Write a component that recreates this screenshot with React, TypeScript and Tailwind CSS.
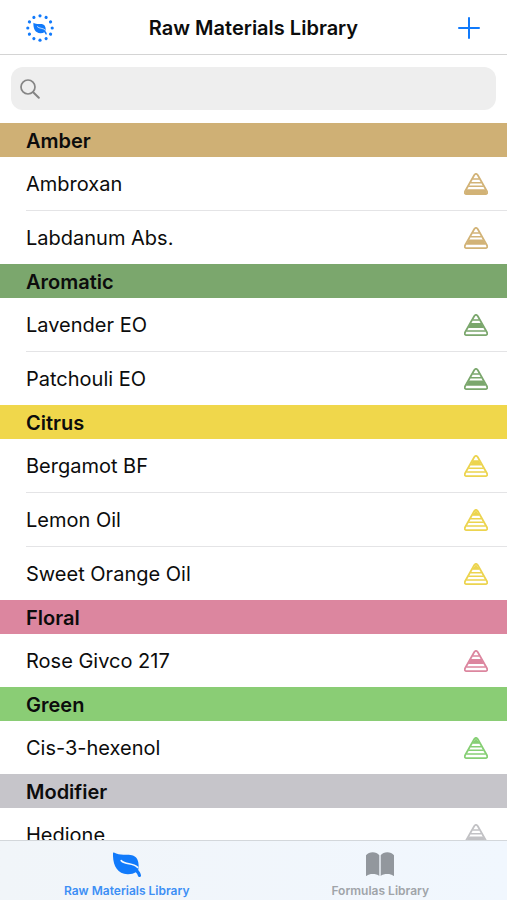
interface Material {
  name: string;
  // Filled layer of the pyramid, 0 is the top one
  note: number;
}

interface Family {
  name: string;
  bg: string;
  text: string;
  materials: Material[];
}

const families: Family[] = [
  {
    name: 'Amber',
    bg: 'bg-[#cfb075]',
    text: 'text-[#d2b377]',
    materials: [
      { name: 'Ambroxan', note: 4 },
      { name: 'Labdanum Abs.', note: 3 },
    ],
  },
  {
    name: 'Aromatic',
    bg: 'bg-[#7ba76d]',
    text: 'text-[#7ba76d]',
    materials: [
      { name: 'Lavender EO', note: 2 },
      { name: 'Patchouli EO', note: 3 },
    ],
  },
  {
    name: 'Citrus',
    bg: 'bg-[#f0d74b]',
    text: 'text-[#ecd44f]',
    materials: [
      { name: 'Bergamot BF', note: 1 },
      { name: 'Lemon Oil', note: 0 },
      { name: 'Sweet Orange Oil', note: 0 },
    ],
  },
  {
    name: 'Floral',
    bg: 'bg-[#dc869f]',
    text: 'text-[#dc869f]',
    materials: [{ name: 'Rose Givco 217', note: 2 }],
  },
  {
    name: 'Green',
    bg: 'bg-[#8acd75]',
    text: 'text-[#86cf74]',
    materials: [{ name: 'Cis-3-hexenol', note: 0 }],
  },
  {
    name: 'Modifier',
    bg: 'bg-[#c6c5ca]',
    text: 'text-[#c2c2c5]',
    materials: [{ name: 'Hedione', note: 3 }],
  },
];

const layers = [
  'M12 1.2 L8.6 6.3 H15.4 Z',
  'M8.8 6 H15.2 L17.4 9.8 H6.6 Z',
  'M6.6 9.6 H17.4 L19.5 13.4 H4.5 Z',
  'M4.6 13.2 H19.4 L21.6 17 H2.4 Z',
  'M2.4 17 H21.6 L23 20 Q23 21.2 21.8 21.2 H2.2 Q1 21.2 1 20 Z',
];

function PyramidIcon({ note, className = '' }: { note: number; className?: string }) {
  return (
    <svg viewBox="0 0 24 22" className={`h-[22px] w-6 ${className}`} fill="none" aria-hidden="true">
      <path d={layers[note]} fill="currentColor" />
      <path
        d="M10.3 2 Q12 -0.3 13.7 2 L22.9 18.2 Q24 20.9 21.4 21.2 H2.6 Q0 20.9 1.1 18.2 Z"
        stroke="currentColor"
        strokeWidth="1.8"
        strokeLinejoin="round"
      />
      <path d="M8.8 6 H15.2 M6.6 9.7 H17.4 M4.5 13.3 H19.5 M2.4 17 H21.6" stroke="currentColor" strokeWidth="1.4" />
    </svg>
  );
}

const leafPath =
  'M0.9 0.6 C0.2 0.2 0 0.7 0 1.4 C-0.4 12.5 3.8 21.8 14.6 22.3 C18 22.4 20.8 21.6 22.8 20.3 C23.9 21.4 24.7 22.8 25.1 24.2 C25.6 25.6 28.1 25.1 28 23.5 C27.8 21.3 26.6 19.5 25.2 18 C26.4 11.5 25.2 5.8 20.5 3.7 C15 1.2 7.5 4.6 0.9 0.6 Z';

function LeafShape() {
  return (
    <>
      <path d={leafPath} fill="currentColor" />
      <path d="M8.2 8.6 C12.6 13.2 19.4 10.4 24.6 15.4" stroke="#f6f9fd" strokeWidth="1.6" strokeLinecap="round" fill="none" />
    </>
  );
}

function LeafIcon() {
  return (
    <svg viewBox="0 0 28 26" className="h-[26px] w-7" aria-hidden="true">
      <LeafShape />
    </svg>
  );
}

function DottedLeafIcon() {
  return (
    <svg viewBox="0 0 28 28" className="size-7" aria-hidden="true">
      {Array.from({ length: 12 }).map((_, index) => (
        <circle key={index} cx="14" cy="1.8" r="1.6" fill="currentColor" transform={`rotate(${index * 30} 14 14)`} />
      ))}
      <g transform="translate(7.4 8.6) scale(0.48)">
        <LeafShape />
      </g>
    </svg>
  );
}

function BookIcon() {
  return (
    <svg viewBox="0 0 28 24" className="h-6 w-7" fill="currentColor" aria-hidden="true">
      <path d="M0 3.2 C3 -0.7 10.5 -0.7 13.3 3.2 V24 C10.5 21.6 3.4 21.5 0.8 23.7 C0.3 24.1 0 23.9 0 23.3 Z" />
      <path d="M28 3.2 C25 -0.7 17.5 -0.7 14.7 3.2 V24 C17.5 21.6 24.6 21.5 27.2 23.7 C27.7 24.1 28 23.9 28 23.3 Z" />
    </svg>
  );
}

function FamilySection({ family }: { family: Family }) {
  return (
    <section>
      <h2 className={`flex h-[34px] items-center pt-0.5 pl-[26px] text-xl font-semibold ${family.bg}`}>{family.name}</h2>
      <ul className="divide-y divide-[#e4e4e6] pl-[26px]">
        {family.materials.map((material) => (
          <li key={material.name}>
            <a href="#" className="flex h-[53px] items-center justify-between pt-px pr-[19px] text-xl">
              {material.name}
              <PyramidIcon note={material.note} className={family.text} />
            </a>
          </li>
        ))}
      </ul>
    </section>
  );
}

export default function App() {
  return (
    <div className="flex h-screen flex-col bg-white font-['Inter',sans-serif] text-[#0c0c0c]">
      <header className="grid h-[55px] shrink-0 grid-cols-[1fr_auto_1fr] items-center border-b border-[#d4d4d4] px-[26px] pt-0.5">
        <button type="button" aria-label="Families" className="justify-self-start text-[#117afb]">
          <DottedLeafIcon />
        </button>
        <h1 className="text-xl font-semibold">Raw Materials Library</h1>
        <button type="button" aria-label="Add material" className="justify-self-end text-[#117afb]">
          <svg viewBox="0 0 24 24" className="size-6" stroke="currentColor" strokeWidth="2" strokeLinecap="round" aria-hidden="true">
            <path d="M12 2 V22 M2 12 H22" />
          </svg>
        </button>
      </header>

      <main className="min-h-0 flex-1 overflow-y-auto [scrollbar-width:none]">
        <div className="px-[11px] pt-3 pb-[13px]">
          <label className="flex h-[43px] items-center rounded-xl bg-[#eeeeee] pl-[9px] text-[#858585]">
            <svg viewBox="0 0 20 20" className="size-5" fill="none" stroke="currentColor" strokeWidth="1.7" strokeLinecap="round" aria-hidden="true">
              <circle cx="8" cy="8" r="7" />
              <path d="M13.2 13.2 L18.8 18.8" strokeWidth="2" />
            </svg>
            <input type="search" aria-label="Search" className="ml-2 min-w-0 flex-1 bg-transparent text-xl text-black outline-none" />
          </label>
        </div>
        {families.map((family) => (
          <FamilySection key={family.name} family={family} />
        ))}
      </main>

      <nav className="grid h-[60px] shrink-0 grid-cols-2 border-t border-[#d3d7db] bg-linear-to-r from-[#f1f5f9] to-[#f1f7fe] text-xs font-semibold">
        <a href="#" aria-current="page" className="flex flex-col items-center justify-between pt-[11px] pb-px text-[#3d8ff5]">
          <span className="text-[#117afb]">
            <LeafIcon />
          </span>
          Raw Materials Library
        </a>
        <a href="#" className="flex flex-col items-center justify-between pt-[11px] pb-px text-[#a0a4a9]">
          <span className="text-[#92979d]">
            <BookIcon />
          </span>
          Formulas Library
        </a>
      </nav>
    </div>
  );
}
